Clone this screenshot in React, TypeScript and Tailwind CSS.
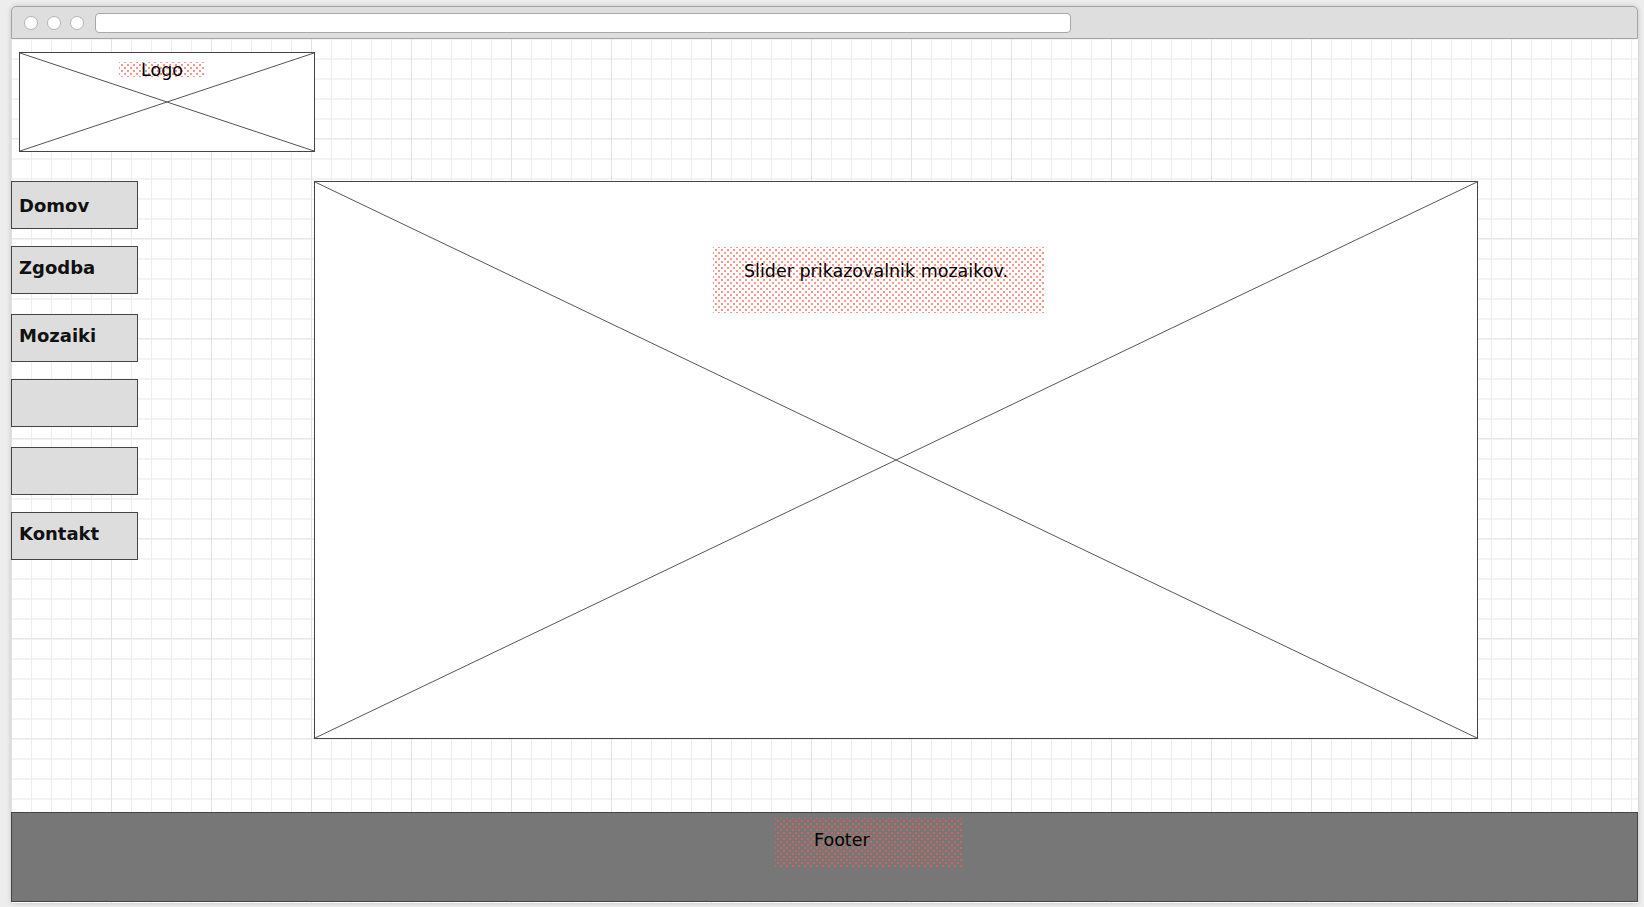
import React from 'react';

const gridBg =
  'bg-white bg-[linear-gradient(to_right,#e2e2e2_1px,transparent_1px),linear-gradient(to_bottom,#e8e8e8_1px,transparent_1px),linear-gradient(to_right,#eeeeee_1px,transparent_1px),linear-gradient(to_bottom,#f3f3f3_2px,transparent_2px)] [background-size:100px_100px,100px_100px,20px_20px,20px_20px] [background-position:0_-1px]';

const dots =
  'bg-[radial-gradient(circle,#ff5a4a_0.6px,transparent_0.9px),radial-gradient(circle,#ff5a4a_0.6px,transparent_0.9px)] [background-size:6px_6px,6px_6px] [background-position:0_0,3px_3px]';

// placeholder cross drawn corner to corner
const Cross = () => (
  <svg className="absolute inset-0 w-full h-full" preserveAspectRatio="none" viewBox="0 0 100 100">
    <line x1="0" y1="0" x2="100" y2="100" stroke="#555" strokeWidth="1" vectorEffect="non-scaling-stroke" />
    <line x1="100" y1="0" x2="0" y2="100" stroke="#555" strokeWidth="1" vectorEffect="non-scaling-stroke" />
  </svg>
);

const navItems = [
  { label: 'Domov', mt: 'mt-0', pt: 'pt-[13px]' },
  { label: 'Zgodba', mt: 'mt-[17px]', pt: 'pt-[10px]' },
  { label: 'Mozaiki', mt: 'mt-[20px]', pt: 'pt-[10px]' },
  { label: '', mt: 'mt-[17px]', pt: 'pt-[10px]' },
  { label: '', mt: 'mt-[20px]', pt: 'pt-[10px]' },
  { label: 'Kontakt', mt: 'mt-[17px]', pt: 'pt-[10px]' },
];

const App: React.FC = () => {
  return (
    <div className="w-[1644px] h-[907px] bg-[#ededed] pt-[6px] pl-[11px] overflow-hidden font-['DejaVu_Sans',sans-serif]">
      <div className="w-[1627px] h-[897px] flex flex-col shadow-[0_0_5px_rgba(0,0,0,0.18)] rounded-t-[5px]">
        {/* Title bar */}
        <div className="h-[33px] bg-[#dedede] border border-[#a4a4a4] rounded-t-[5px] flex items-center pl-[12px] shrink-0">
          <div className="flex gap-[9px]">
            <span className="w-[14px] h-[14px] rounded-full bg-white border border-[#b4b4b4]" />
            <span className="w-[14px] h-[14px] rounded-full bg-white border border-[#b4b4b4]" />
            <span className="w-[14px] h-[14px] rounded-full bg-white border border-[#b4b4b4]" />
          </div>
          <div className="ml-[11px] w-[976px] h-[20px] bg-white border border-[#a8a8a8] rounded-[4px]" />
        </div>

        {/* Content */}
        <div className={`flex-1 flex flex-col ${gridBg}`}>
          <div className="relative ml-[8px] mt-[13px] w-[296px] h-[100px] border border-[#444] bg-white">
            <Cross />
            <div className={`relative ml-[99px] mt-[9px] w-[86px] h-[15px] ${dots} flex justify-center`}>
              <span className="text-[17.5px] leading-[17px] text-black">Logo</span>
            </div>
          </div>

          <div className="flex mt-[29px]">
            <nav className="w-[127px] flex flex-col">
              {navItems.map((item, i) => (
                <div
                  key={i}
                  className={`h-[48px] bg-[#dddddd] border border-[#444] pl-[7px] ${item.mt} ${item.pt} text-[18px] leading-[21px] font-bold text-[#111]`}
                >
                  {item.label}
                </div>
              ))}
            </nav>

            <div className="relative ml-[176px] w-[1164px] h-[558px] border border-[#444] bg-white">
              <Cross />
              <div className={`relative ml-[398px] mt-[65px] w-[332px] h-[66px] ${dots} pt-[11px] pr-[6px] text-center text-[17.5px] text-black`}>
                Slider prikazovalnik mozaikov.
              </div>
            </div>
          </div>

          <footer className="mt-[73px] h-[90px] bg-[#777777] border border-[#444]">
            <div className={`ml-[763px] mt-[5px] w-[188px] h-[49px] ${dots} pl-[39px] pt-[9px] text-[17.5px] text-black`}>
              Footer
            </div>
          </footer>
        </div>
      </div>
    </div>
  );
};

export default App;
